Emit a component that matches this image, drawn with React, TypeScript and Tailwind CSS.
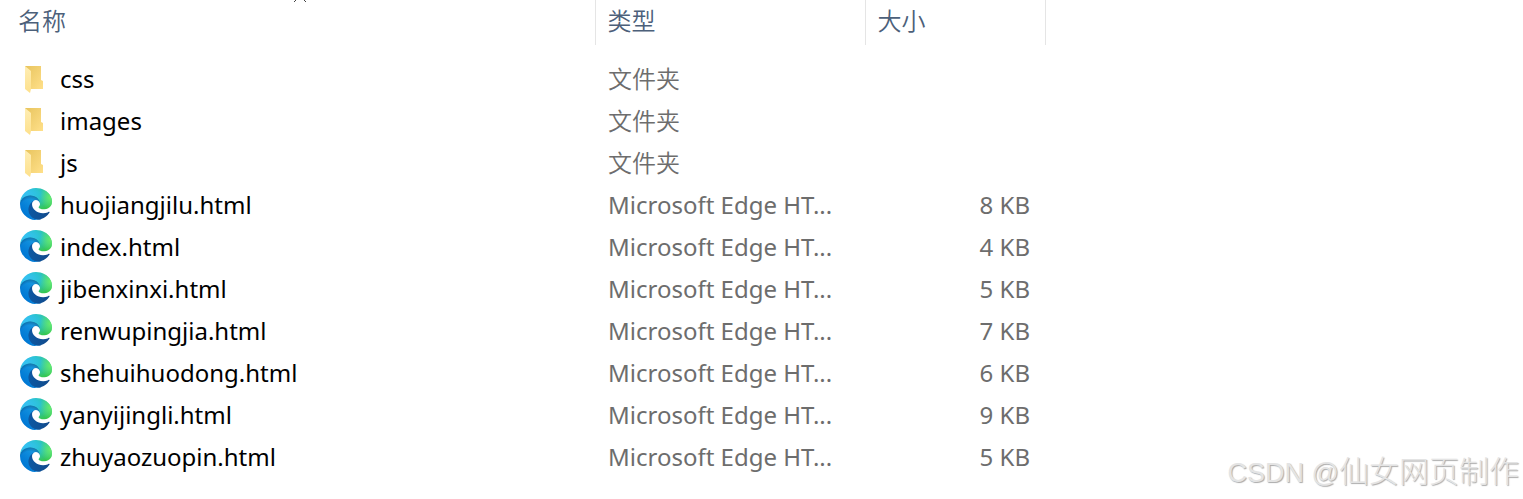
interface FileEntry {
  name: string;
  kind: "folder" | "html";
  size?: string;
}

const files: FileEntry[] = [
  { name: "css", kind: "folder" },
  { name: "images", kind: "folder" },
  { name: "js", kind: "folder" },
  { name: "huojiangjilu.html", kind: "html", size: "8 KB" },
  { name: "index.html", kind: "html", size: "4 KB" },
  { name: "jibenxinxi.html", kind: "html", size: "5 KB" },
  { name: "renwupingjia.html", kind: "html", size: "7 KB" },
  { name: "shehuihuodong.html", kind: "html", size: "6 KB" },
  { name: "yanyijingli.html", kind: "html", size: "9 KB" },
  { name: "zhuyaozuopin.html", kind: "html", size: "5 KB" },
];

const typeLabels = {
  folder: "文件夹",
  html: "Microsoft Edge HT...",
};

function FolderIcon() {
  return (
    <svg viewBox="0 0 32 32" className="h-8 w-8 shrink-0" aria-hidden="true">
      <path d="M5 4H21V18L23 19V27H8Z" fill="url(#folder-back)" />
      <path d="M5 4L11 9V27L10 31L5 27Z" fill="url(#folder-front)" />
    </svg>
  );
}

function EdgeIcon() {
  return (
    <svg viewBox="0 0 256 256" className="h-8 w-8 shrink-0" aria-hidden="true">
      <g transform="translate(-4.63 -4.92)">
        <path
          fill="url(#edge-navy)"
          d="M235.68 195.46a93.73 93.73 0 01-10.54 4.71 101.87 101.87 0 01-35.9 6.46c-47.32 0-88.54-32.55-88.54-74.32A31.48 31.48 0 01117.13 105c-42.8 1.8-53.8 46.4-53.8 72.53 0 73.88 68.09 81.37 82.76 81.37 7.91 0 19.84-2.3 27-4.56l1.31-.44a128.34 128.34 0 0066.6-52.8 4 4 0 00-5.32-5.64z"
        />
        <path
          fill="url(#edge-blue)"
          d="M110.34 246.34A79.2 79.2 0 0187.6 225a80.72 80.72 0 0129.53-120c3.12-1.47 8.45-4.13 15.54-4a32.35 32.35 0 0125.69 13 31.88 31.88 0 016.36 18.66c0-.21 24.46-79.6-80-79.6-43.9 0-80 41.66-80 78.21a130.15 130.15 0 0012.11 56 128 128 0 00156.38 67.11 75.55 75.55 0 01-62.78-8z"
        />
        <path
          fill="url(#edge-shade)"
          opacity=".41"
          d="M110.34 246.34A79.2 79.2 0 0187.6 225a80.72 80.72 0 0129.53-120c3.12-1.47 8.45-4.13 15.54-4a32.35 32.35 0 0125.69 13 31.88 31.88 0 016.36 18.66c0-.21 24.46-79.6-80-79.6-43.9 0-80 41.66-80 78.21a130.15 130.15 0 0012.11 56 128 128 0 00156.38 67.11 75.55 75.55 0 01-62.78-8z"
        />
        <path
          fill="url(#edge-teal)"
          d="M156.94 153.78c-.81 1.05-3.3 2.5-3.3 5.66 0 2.61 1.7 5.12 4.72 7.23 14.38 10 41.49 8.68 41.56 8.68a59.56 59.56 0 0030.27-8.35 61.38 61.38 0 0030.43-52.88c.26-22.41-8-37.31-11.34-43.91-21.19-41.45-66.93-65.29-116.67-65.29a128 128 0 00-128 126.2c.48-36.54 36.8-66.05 80-66.05 3.5 0 23.46.34 42 10.07 16.34 8.58 24.9 18.94 30.85 29.21 6.18 10.67 7.28 24.15 7.28 29.52s-2.74 13.33-7.8 19.91z"
        />
        <path
          fill="url(#edge-green)"
          d="M156.94 153.78c-.81 1.05-3.3 2.5-3.3 5.66 0 2.61 1.7 5.12 4.72 7.23 14.38 10 41.49 8.68 41.56 8.68a59.56 59.56 0 0030.27-8.35 61.38 61.38 0 0030.43-52.88c.26-22.41-8-37.31-11.34-43.91-21.19-41.45-66.93-65.29-116.67-65.29a128 128 0 00-128 126.2c.48-36.54 36.8-66.05 80-66.05 3.5 0 23.46.34 42 10.07 16.34 8.58 24.9 18.94 30.85 29.21 6.18 10.67 7.28 24.15 7.28 29.52s-2.74 13.33-7.8 19.91z"
        />
      </g>
    </svg>
  );
}

// Gradients shared by every row icon
function IconDefs() {
  return (
    <svg className="absolute h-0 w-0" aria-hidden="true">
      <defs>
        <linearGradient id="folder-back" x1="0" y1="0" x2="1" y2="1">
          <stop offset="0" stopColor="#e8c45e" />
          <stop offset="1" stopColor="#ffe08a" />
        </linearGradient>
        <linearGradient id="folder-front" x1="0" y1="0" x2="0" y2="1">
          <stop offset="0" stopColor="#ffeeb4" />
          <stop offset="1" stopColor="#fde08c" />
        </linearGradient>
        <linearGradient id="edge-navy" x1="63.33" y1="84.03" x2="241.67" y2="84.03" gradientTransform="matrix(1 0 0 -1 0 266)" gradientUnits="userSpaceOnUse">
          <stop offset="0" stopColor="#0c59a4" />
          <stop offset="1" stopColor="#114a8b" />
        </linearGradient>
        <linearGradient id="edge-blue" x1="157.35" y1="161.39" x2="45.96" y2="40.06" gradientTransform="matrix(1 0 0 -1 0 266)" gradientUnits="userSpaceOnUse">
          <stop offset="0" stopColor="#1b9de2" />
          <stop offset=".16" stopColor="#1595df" />
          <stop offset=".67" stopColor="#0680d7" />
          <stop offset="1" stopColor="#0078d4" />
        </linearGradient>
        <radialGradient id="edge-shade" cx="-340.29" cy="62.99" r="143.24" gradientTransform="matrix(.15 -.99 -.8 -.12 176.64 -125.4)" gradientUnits="userSpaceOnUse">
          <stop offset=".76" stopOpacity="0" />
          <stop offset=".95" stopOpacity=".5" />
          <stop offset="1" />
        </radialGradient>
        <radialGradient id="edge-teal" cx="113.37" cy="570.21" r="202.43" gradientTransform="matrix(-.04 1 2.13 .08 -1179.54 -106.69)" gradientUnits="userSpaceOnUse">
          <stop offset="0" stopColor="#35c1f1" />
          <stop offset=".11" stopColor="#34c1ed" />
          <stop offset=".23" stopColor="#2fc2df" />
          <stop offset=".31" stopColor="#2bc3d2" />
          <stop offset=".67" stopColor="#36c752" />
        </radialGradient>
        <radialGradient id="edge-green" cx="376.52" cy="567.97" r="97.34" gradientTransform="matrix(.28 .96 .78 -.23 -303.76 -148.5)" gradientUnits="userSpaceOnUse">
          <stop offset="0" stopColor="#66eb6e" />
          <stop offset="1" stopColor="#66eb6e" stopOpacity="0" />
        </radialGradient>
      </defs>
    </svg>
  );
}

export default function App() {
  return (
    <main className="relative min-h-screen overflow-hidden bg-white font-['Noto_Sans','Noto_Sans_CJK_SC',sans-serif] text-[24px] leading-8">
      <IconDefs />
      <table className="w-full table-fixed border-collapse text-left">
        <colgroup>
          <col className="w-[595px]" />
          <col className="w-[270px]" />
          <col className="w-[180px]" />
          <col />
        </colgroup>
        <thead className="text-[#4c607a]">
          <tr className="h-[45px]">
            <th className="relative border-r border-[#e5e5e5] pb-1 pl-[18px] font-[350]">
              名称
              {/* Sort arrow, clipped by the top of the list */}
              <svg viewBox="0 0 14 2" className="absolute top-0 left-[293px] h-[2px] w-[14px]" aria-hidden="true">
                <path d="M3 0L1 2M11 0L13 2" stroke="#444" fill="none" />
              </svg>
            </th>
            <th className="border-r border-[#e5e5e5] pb-1 pl-3 font-[350]">类型</th>
            <th className="border-r border-[#e5e5e5] pb-1 pl-3 font-[350]">大小</th>
            <th />
          </tr>
        </thead>
        <tbody className="text-[#6d6d6d]">
          <tr className="h-[13px]" aria-hidden="true" />
          {files.map((file) => (
            <tr key={file.name} className="h-[42px]">
              <td className="pb-0.5 pl-5">
                <div className="flex items-start gap-2 text-black">
                  {file.kind === "folder" ? <FolderIcon /> : <EdgeIcon />}
                  <span className="pt-px">{file.name}</span>
                </div>
              </td>
              <td className={file.kind === "folder" ? "pl-[13px] font-[350]" : "pl-[13px]"}>
                {typeLabels[file.kind]}
              </td>
              <td className="pr-[15px] text-right">{file.size}</td>
              <td />
            </tr>
          ))}
        </tbody>
      </table>
      <p className="absolute right-1 bottom-[6px] font-['Liberation_Sans','Noto_Sans_CJK_SC',sans-serif] text-[30px] leading-10 font-light text-[#e4e4e4] [text-shadow:1px_1px_1px_#aaa]">
        <span className="text-[27px]">CSDN @</span>仙女网页制作
      </p>
    </main>
  );
}
